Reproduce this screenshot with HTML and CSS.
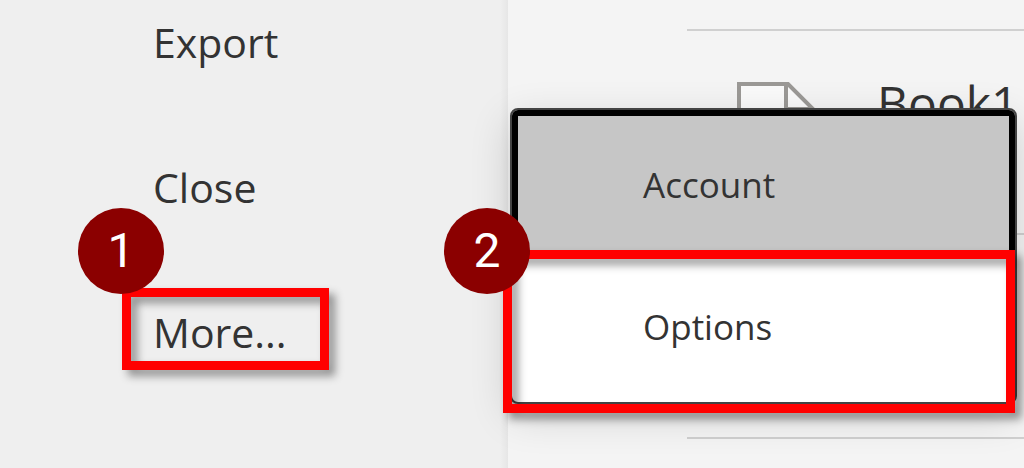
FILE: index.html
```html
<!DOCTYPE html>
<html lang="en">
<head>
    <meta charset="UTF-8">
    <meta name="viewport" content="width=device-width, initial-scale=1.0">
    <title>Excel - More options</title>
    <link rel="stylesheet" href="styles.css">
</head>
<body>
    <nav class="sidebar">
        <button class="nav-item">Export</button>
        <button class="nav-item">Close</button>
        <div class="marked">
            <button class="nav-item">More...</button>
            <span class="highlight highlight-more"></span>
            <span class="step step-more">1</span>
        </div>
    </nav>

    <main class="content">
        <ul class="files">
            <li class="file">
                <svg class="file-icon" viewBox="0 0 78 100" aria-hidden="true">
                    <path d="M2 2H51L76 27V98H2Z" fill="#fafafa" stroke="#9b9996" stroke-width="4"/>
                    <path d="M49 2V27H76" fill="none" stroke="#9b9996" stroke-width="4"/>
                </svg>
                <a class="file-name" href="#">Book1</a>
            </li>
            <li class="file"></li>
        </ul>

        <div class="menu">
            <button class="menu-item focused">Account</button>
            <button class="menu-item">Options</button>
            <span class="highlight highlight-options"></span>
            <span class="step step-options">2</span>
        </div>
    </main>
</body>
</html>
```
FILE: styles.css
```css
* {
    box-sizing: border-box;
}
body {
    display: flex;
    min-height: 100vh;
    margin: 0;
    overflow: hidden;
    background-color: #efefef;
    color: #333;
    font-family: "Open Sans", "Noto Sans", sans-serif;
}
button {
    border: none;
    background: none;
    color: inherit;
    font-family: inherit;
    text-align: left;
    cursor: pointer;
}

/* left navigation */
.sidebar {
    display: flex;
    flex-direction: column;
    align-items: flex-start;
    gap: 89px;
    flex: 0 0 508px;
    padding: 14px 0 0 153px;
    background: linear-gradient(to left, #e6e6e6, #efefef 8px);
}
.nav-item {
    display: block;
    padding: 0;
    font-size: 41px;
    line-height: 56px;
}
.marked {
    position: relative;
}

/* recent files */
.content {
    position: relative;
    flex: 1;
    min-width: 0;
    padding: 29px 0 0 179px;
    background-color: #f4f4f4;
}
.files {
    margin: 0;
    padding: 0;
    border-top: 2px solid #d0d0d0;
    list-style: none;
}
.file {
    display: flex;
    align-items: center;
    gap: 62px;
    height: 204px;
    padding-left: 50px;
    border-bottom: 2px solid #d0d0d0;
}
.file-icon {
    flex: none;
    width: 78px;
    height: 100px;
}
.file-name {
    align-self: flex-start;
    margin-top: 42px;
    color: inherit;
    font-size: 48px;
    line-height: 60px;
    text-decoration: none;
}

/* popup menu */
.menu {
    position: absolute;
    top: 108px;
    left: 2px;
    right: 7px;
    border: 2px solid #444;
    border-radius: 8px;
    background-color: #fff;
    box-shadow: 0 12px 40px rgba(0, 0, 0, 0.16);
}
.menu-item {
    display: block;
    width: 100%;
    height: 146px;
    padding: 0 0 4px 131px;
    font-size: 35px;
    line-height: 48px;
}
.menu-item.focused {
    padding: 4px 0 0 125px;
    border: 6px solid #000;
    border-radius: 6px 6px 0 0;
    background-color: #c6c6c6;
}

/* step markers */
.highlight {
    position: absolute;
    border: 9px solid #f00;
    filter: drop-shadow(6px 6px 4px rgba(0, 0, 0, 0.4));
    pointer-events: none;
}
.highlight-more {
    inset: -16px -42px -10px -31px;
}
.highlight-options {
    inset: 140px 0 -11px -9px;
}
.step {
    position: absolute;
    width: 86px;
    height: 86px;
    border-radius: 50%;
    background-color: #8b0000;
    color: #fff;
    font-family: Roboto, sans-serif;
    font-size: 48px;
    line-height: 86px;
    text-align: center;
}
.step-more {
    top: -96px;
    left: -75px;
}
.step-options {
    top: 98px;
    left: -68px;
}
```
